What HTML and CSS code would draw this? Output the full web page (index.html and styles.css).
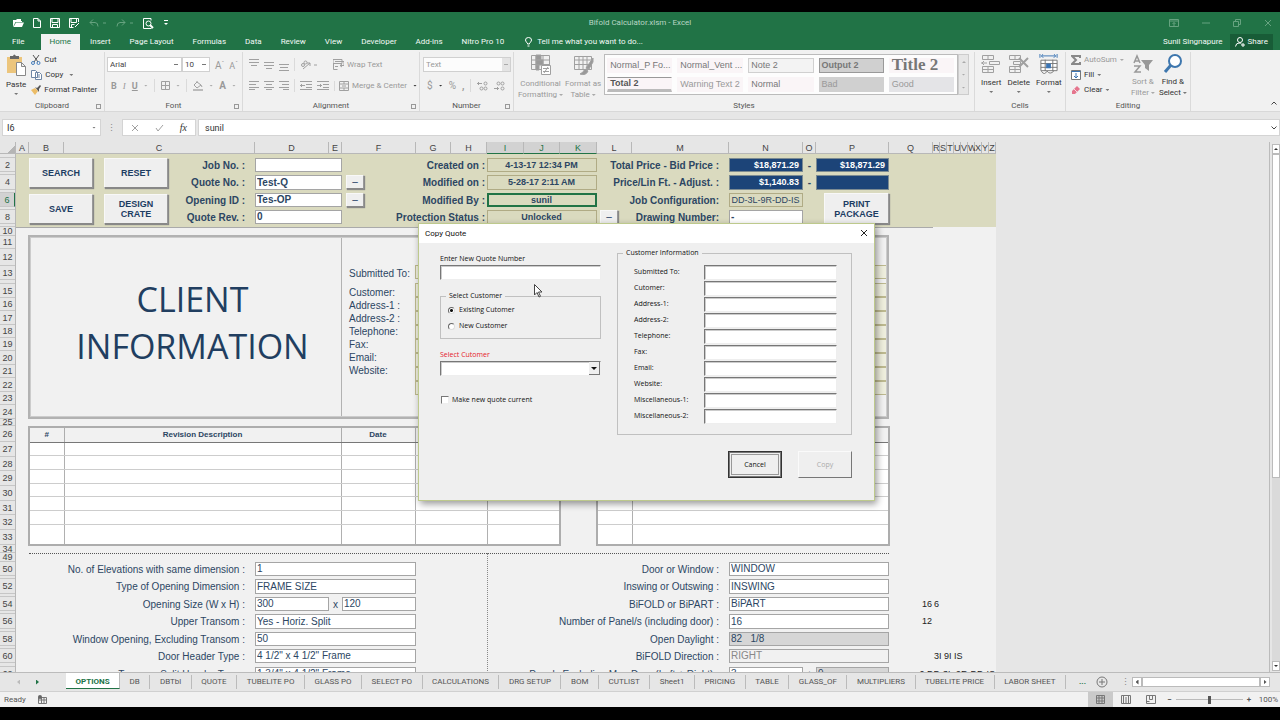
FILE: index.html
```html
<!DOCTYPE html>
<html lang="en">
<head>
<meta charset="utf-8">
<title>Bifold Calculator.xlsm - Excel</title>
<link rel="stylesheet" href="styles.css">
</head>
<body>
<div class="app">
<header class="titlebar">
  <div class="quick">
    <svg width="12" height="10" viewBox="0 0 12 10"><path fill="#fff" d="M1 9V2h3l1-1h4v2h1v1H3.500zM4 4.500h8L10 9H1.500z"/></svg>
    <svg width="8" height="10" viewBox="0 0 8 10" class="line-w"><path d="M.5.5h4.500l2.500 2.500v6.500h-7zM5 .5V3h2.500"/></svg>
    <svg width="10" height="10" viewBox="0 0 10 10" class="line-w"><path d="M.5.5h9v9h-9zM2 1v3.500h6V1M2.500 9.500v-3h5v3"/></svg>
    <svg width="11" height="10" viewBox="0 0 11 10" class="line-w"><path d="M9.500 4V.5h-9v9h4M2 1v3.500h5.500V1M2.500 9.500v-3h3M6 9l4-4"/></svg>
    <svg width="18" height="9" viewBox="0 0 18 9" class="line-d"><path d="M4 .5L1 3.500l3 3M1 3.500h5q3 0 3 4M14 4h3"/></svg>
    <svg width="18" height="9" viewBox="0 0 18 9" class="line-d"><path d="M6 .5l3 3-3 3M9 3.500H4q-3 0-3 4M14 4h3"/></svg>
    <svg width="11" height="11" viewBox="0 0 11 11" class="line-w"><path d="M8 .5H.5v10h8M8 .5v2"/><circle cx="5.500" cy="5.500" r="2.500"/><path stroke-width="2" d="M7 7l3 3"/></svg>
    <svg width="6" height="6" viewBox="0 0 6 6"><path fill="#fff" d="M1 0h4v1H1zM1 3h4L3 5z"/></svg>
  </div>
  <div class="doc-title">Bifold Calculator.xlsm - Excel</div>
  <div class="window-tools">
    <svg width="10" height="8" viewBox="0 0 10 8" class="line-d"><path d="M.5.500h9v7h-9zM.5 2h9M5 7V3.500M3.500 5L5 3.500 6.500 5"/></svg>
    <svg width="8" height="8" viewBox="0 0 8 8" class="line-d"><path d="M0 4h8"/></svg>
    <svg width="8" height="8" viewBox="0 0 8 8" class="line-d"><path d="M.5 2.500h5v5h-5zM2.500 2.500v-2h5v5h-2"/></svg>
    <svg width="8" height="8" viewBox="0 0 8 8" class="line-d"><path d="M1 1l6 6M7 1L1 7"/></svg>
  </div>
</header>
<nav class="menu">
  <button class="file">File</button><button class="active">Home</button><button>Insert</button><button>Page Layout</button><button>Formulas</button><button>Data</button><button>Review</button><button>View</button><button>Developer</button><button>Add-ins</button><button>Nitro Pro 10</button>
  <button class="tell"><svg width="7" height="10" viewBox="0 0 7 10" class="line-w"><path d="M2.500 7V6Q.5 5 .5 3a3 2.500 0 0 1 6 0q0 2-2 3v1zM2.500 9h2"/></svg>Tell me what you want to do...</button>
  <span class="user">Sunil Singnapure</span>
  <button class="share"><svg width="10" height="10" viewBox="0 0 10 10" class="line-w"><circle cx="5" cy="3" r="2.500"/><path d="M.5 9.500Q1 6 4 6q2 0 2.500 1M8 6v4M6 8h4"/></svg>Share</button>
</nav>
<section class="ribbon">
  <div class="group g-clip">
    <div class="tools">
      <button class="big"><svg width="20" height="22" viewBox="0 0 20 22"><path fill="#ecc57c" d="M1 3h15v16H1z"/><path fill="#666" d="M4 2h3q1-3 3 0h3v3H4z"/><path fill="#fff" stroke="#888" d="M10.500 8.500h5l4 4v9h-9zM15.500 8.500v4h4"/></svg><span>Paste</span><i class="caret"></i></button>
      <div class="stack">
        <button><svg width="10" height="10" viewBox="0 0 10 10" fill="none" stroke="#555"><path d="M2 0l5 7M8 0L3 7"/><g stroke="#447dbb"><circle cx="2" cy="8" r="1.500"/><circle cx="7.500" cy="8" r="1.500"/></g></svg>Cut</button>
        <button><svg width="11" height="10" viewBox="0 0 11 10" fill="#fff" stroke="#6e86a5"><path d="M.5.500h4l2 2v5h-6zM4.500 2.500h4l2 2v5h-6zM6 5h3M6 7h3"/></svg>Copy <i class="caret"></i></button>
        <button><svg width="10" height="10" viewBox="0 0 10 10"><path fill="#ecbd68" d="M0 5l4-2 3 3-3 4z"/><path fill="#555" d="M4 2l2 1 3-3 1 1-2 3v3z"/></svg>Format Painter</button>
      </div>
    </div>
    <div class="group-name">Clipboard<i class="launcher"></i></div>
  </div>
  <div class="group g-font dim">
    <div class="tools rows">
      <div class="row tight"><select class="font-name" aria-label="Font"><option>Arial</option></select><select class="font-size" aria-label="Font size"><option>10</option></select><button class="glyph">A<sup>ˆ</sup></button><button class="glyph small-a">A<sup>ˇ</sup></button></div>
      <div class="row spaced"><button><b>B</b></button><button class="ital"><em>I</em></button><button><b><u>U</u></b></button><i class="caret"></i><i class="sep"></i><svg width="9" height="9" viewBox="0 0 9 9" class="line-g"><path d="M.5.5h8v8h-8zM4.500 0v9M0 4.500h9"/></svg><i class="caret"></i><i class="sep"></i><svg width="10" height="10" viewBox="0 0 10 10" class="line-g"><path d="M1 4l3-3 4 3-4 3zM4 1V0M8 4l1 2"/><path fill="#bbb" stroke="none" d="M0 8h10v2H0z"/></svg><i class="caret"></i><button class="glyph"><b>A</b></button><i class="caret"></i></div>
    </div>
    <div class="group-name">Font<i class="launcher"></i></div>
  </div>
  <div class="group g-align dim">
    <div class="tools rows">
      <div class="row spaced">
        <svg width="10" height="12" viewBox="0 0 10 12" class="line-g"><path d="M0 .5h10M0 3.500h10M2 6.500h6"/></svg>
        <svg width="10" height="10" viewBox="0 0 10 10" class="line-g"><path d="M0 2.500h10M0 5.500h10M2 8.500h6"/></svg>
        <svg width="10" height="12" viewBox="0 0 10 12" class="line-g"><path d="M0 5.500h10M1 8.500h8M0 11.500h10"/></svg>
        <i class="sep"></i>
        <svg width="17" height="10" viewBox="0 0 17 10" class="line-g"><circle cx="3" cy="5" r="1.500"/><circle cx="5.500" cy="2.500" r="1.500"/><path d="M3 9l7-6M10 6V3H7M14 5h3"/></svg>
        <button class="wrap"><svg width="11" height="11" viewBox="0 0 11 11" class="line-g"><path d="M0 .5h9v4H0zM.5 4.500v6h4M2 2.500h9v4H7M9 5L7 6.500 9 8M2 7.500h3"/></svg>Wrap Text</button>
      </div>
      <div class="row spaced">
        <svg width="10" height="9" viewBox="0 0 10 9" class="line-g"><path d="M0 .5h10M0 3.500h7M0 6.500h10M0 8.500h6"/></svg>
        <svg width="10" height="9" viewBox="0 0 10 9" class="line-g"><path d="M0 .5h10M2 3.500h6M0 6.500h10M2 8.500h6"/></svg>
        <svg width="10" height="9" viewBox="0 0 10 9" class="line-g"><path d="M0 .5h10M3 3.500h7M0 6.500h10M4 8.500h6"/></svg>
        <i class="sep"></i>
        <svg width="12" height="9" viewBox="0 0 12 9" class="line-g"><path d="M0 .5h12M6 3.500h6M6 6.500h6M0 8.500h12M0 4.500h5M2 3L.500 4.500 2 6"/></svg>
        <svg width="12" height="9" viewBox="0 0 12 9" class="line-g"><path d="M0 .5h12M6 3.500h6M6 6.500h6M0 8.500h12M0 4.500h5M3 3l1.500 1.500L3 6"/></svg>
        <button class="merge"><svg width="10" height="10" viewBox="0 0 10 10" class="line-g"><path d="M.5.500h9v9h-9zM.5 3h9M.5 7h9M3 5h4M5 0v3M5 7v3"/></svg>Merge &amp; Center <i class="caret dark"></i></button>
      </div>
    </div>
    <div class="group-name">Alignment<i class="launcher"></i></div>
  </div>
  <div class="group g-number dim">
    <div class="tools rows">
      <div class="row"><select class="format" aria-label="Number format"><option>Text</option></select></div>
      <div class="row spaced num"><button class="glyph">$</button><i class="caret dark"></i><button class="glyph">%</button><button class="glyph"><b>,</b></button><i class="sep"></i>
        <svg width="11" height="10" viewBox="0 0 11 10" class="line-g"><path d="M0 2.500h5M2 1L.5 2.500 2 4"/><circle cx="8.500" cy="2.500" r="1.500"/><circle cx="4.500" cy="7.500" r="1.500"/><circle cx="8.500" cy="7.500" r="1.500"/></svg>
        <svg width="11" height="10" viewBox="0 0 11 10" class="line-g"><path d="M0 7.500h5M3 6l1.500 1.500L3 9"/><circle cx="8.500" cy="2.500" r="1.500"/><circle cx="4.500" cy="2.500" r="1.500"/><circle cx="8.500" cy="7.500" r="1.500"/></svg></div>
    </div>
    <div class="group-name">Number<i class="launcher"></i></div>
  </div>
  <div class="group g-styles dim">
    <div class="tools">
      <button class="big"><svg width="21" height="22" viewBox="0 0 21 22" class="line-g"><path d="M1.500 1.500h18v14h-18zM1.500 6h18M1.500 10.500h18M6 1v15M13 1v15"/><path fill="#999" d="M6 1h5v5H6zM6 6h7v5H6zM6 11h3v5H6z"/><path fill="#fff" d="M11.500 11.500h9v9h-9z"/><path d="M13 14.500h6M13 17.500h6M18 13l-4 6"/></svg><span>Conditional<br>Formatting <i class="caret"></i></span></button>
      <button class="big"><svg width="21" height="22" viewBox="0 0 21 22" class="line-g"><path d="M1.500 2.500h17v13h-17zM1.500 6h17M1.500 10.500h17M6 2v14M10 2v14M14 2v14"/><path fill="#999" d="M20 4l-7 10 3 1 4-7zM12 15l3 2q-2 5-8 3 3-1 5-5z"/></svg><span>Format as<br>Table <i class="caret"></i></span></button>
      <div class="gallery">
        <button>Normal_P Fo...</button><button>Normal_Vent ...</button><button class="note">Note 2</button><button class="output">Output 2</button><button class="title2">Title 2</button>
        <button class="total">Total 2</button><button class="warn">Warning Text 2</button><button>Normal</button><button class="bad">Bad</button><button class="good">Good</button>
      </div>
      <div class="gallery-scroll"><i class="caret up"></i><i class="caret"></i><i class="caret more"></i></div>
    </div>
    <div class="group-name">Styles</div>
  </div>
  <div class="group g-cells">
    <div class="tools">
      <button class="big"><svg width="20" height="20" viewBox="0 0 20 20" class="line-g"><path d="M1.500 1.500h11v4h-11zM7 1v4M8.500 7.500h10v3h-10zM1.500 12.500h11v6h-11zM7 12v7M1.500 15.500h11M0 9h6M3 7L1 9l2 2"/></svg><span>Insert</span><i class="caret"></i></button>
      <button class="big"><svg width="20" height="20" viewBox="0 0 20 20" class="line-g"><path d="M.5 1.500h11v4H.5zM6 1v4M4.500 7.500h7v3h-7zM.5 12.500h11v6H.5zM6 12v7M.5 15.500h11"/><path stroke-width="2" d="M10 4l9 9M19 4l-9 9"/></svg><span>Delete</span><i class="caret"></i></button>
      <button class="big"><svg width="20" height="20" viewBox="0 0 20 21" fill="none" stroke="#777"><path fill="#fff" d="M1.500 6.500h17v11h-17zM1.500 10h17M1.500 14h17M6 6v12M14 6v12M2 18q3 5 6 0 3 4 7 0"/><path fill="#3b75b5" stroke="none" d="M7 10h5v5H7z"/><path stroke="#3b75b5" d="M2 2h15M4 0L2 2l2 2M15 0l2 2-2 2M.5 0v4M18.500 0v4"/></svg><span>Format</span><i class="caret"></i></button>
    </div>
    <div class="group-name">Cells</div>
  </div>
  <div class="group g-edit">
    <div class="tools">
      <div class="stack edit">
        <button class="dim"><svg width="10" height="10" viewBox="0 0 10 10" fill="none" stroke="#888" stroke-width="2"><path d="M9 3V1H1l4 4-4 4h8V7"/></svg>AutoSum <i class="caret auto"></i></button>
        <button><svg width="10" height="10" viewBox="0 0 10 10" fill="#fff" stroke="#777"><path d="M.5.500h9v9h-9z"/><path stroke="#3b75b5" d="M.5 1.500h9M5 3v5M3 6l2 2 2-2"/></svg>Fill<i class="caret"></i></button>
        <button><svg width="10" height="10" viewBox="0 0 10 10"><path fill="#e5758d" d="M1 6l5-5 3 3-5 5H1z"/><path stroke="#f5dce2" d="M3 4l3 3"/></svg>Clear<i class="caret"></i></button>
      </div>
      <button class="big dim"><svg width="20" height="20" viewBox="0 0 20 20" fill="none" stroke="#999" stroke-width="1.500"><path d="M1 9l3-7 3 7M2 7h4M1 12h6l-5 6h6"/><path fill="#999" stroke="none" d="M8 6h12l-4 5v6l-4-3v-3z"/></svg><span>Sort &amp;<br>Filter <i class="caret"></i></span></button>
      <button class="big"><svg width="20" height="20" viewBox="0 0 20 20" fill="#fff" stroke="#3e77ae" stroke-width="2"><circle cx="12" cy="7" r="6"/><path stroke-width="3" d="M8 11l-6 7"/></svg><span>Find &amp;<br>Select <i class="caret"></i></span></button>
    </div>
    <div class="group-name">Editing</div>
  </div>
  <button class="collapse" aria-label="Collapse ribbon"><svg width="6" height="4" viewBox="0 0 6 4" fill="none" stroke="#444"><path d="M.5 3.500L3 1l2.500 2.500"/></svg></button>
</section>
<section class="formula">
  <div class="name-box"><span>I6</span><i class="caret"></i></div>
  <span class="grip">⋮</span>
  <div class="fx"><svg width="8" height="8" viewBox="0 0 8 8" class="line-g"><path d="M1 1l6 6M7 1L1 7"/></svg><svg width="9" height="8" viewBox="0 0 9 8" class="line-g"><path d="M1 4l2 3 5-6"/></svg><span class="fx-mark">fx</span></div>
  <input class="formula-text" aria-label="Formula" value="sunil">
  <svg class="expand" width="6" height="4" viewBox="0 0 6 4" fill="none" stroke="#444"><path d="M.5.500L3 3 5.500.5"/></svg>
</section>
<main class="viewport">
<div class="sheet">
  <div class="col-head corner"></div><div class="col-head">A</div><div class="col-head">B</div><div class="col-head">C</div><div class="col-head">D</div><div class="col-head">E</div><div class="col-head">F</div><div class="col-head">G</div><div class="col-head">H</div><div class="col-head on">I</div><div class="col-head on">J</div><div class="col-head on">K</div><div class="col-head">L</div><div class="col-head">M</div><div class="col-head">N</div><div class="col-head">O</div><div class="col-head">P</div><div class="col-head">Q</div><div class="col-head">R</div><div class="col-head">S</div><div class="col-head">T</div><div class="col-head">U</div><div class="col-head">V</div><div class="col-head">W</div><div class="col-head">X</div><div class="col-head">Y</div><div class="col-head">Z</div>

  <div class="row-heads">
    <div></div><div>2</div><div></div><div>4</div><div></div><div class="on">6</div><div></div><div>8</div><div></div><div>10</div><div>11</div><div>12</div><div>13</div><div></div><div>15</div><div>16</div><div>17</div><div>18</div><div>19</div><div>20</div><div>21</div><div>22</div><div>23</div><div>24</div><div>25</div><div>26</div><div>27</div><div>28</div><div>29</div><div>30</div><div>31</div><div>32</div><div>33</div><div>34</div><div>49</div><div>50</div><div></div><div>52</div><div></div><div>54</div><div></div><div>56</div><div></div><div>58</div><div></div><div>60</div><div></div><div>62</div>
  </div>

  <div class="freeze"></div><div class="freeze-line"></div>
  <div class="actions"><button>SEARCH</button><button>RESET</button><button>SAVE</button><button>DESIGN<br>CRATE</button></div>

  <label class="lab c r2 strong" for="job">Job No. :</label><input class="box d r2 strong" id="job">
  <label class="lab c r4 strong" for="quote">Quote No. :</label><input class="box d r4 strong" id="quote" value="Test-Q"><button class="pick f r4">–</button>
  <label class="lab c r6 strong" for="opening">Opening ID :</label><input class="box d r6 strong" id="opening" value="Tes-OP"><button class="pick f r6">–</button>
  <label class="lab c r8 strong" for="rev">Quote Rev. :</label><input class="box d r8 strong" id="rev" value="0">

  <div class="lab h r2 strong">Created on :</div><div class="box beige i r2">4-13-17 12:34 PM</div>
  <div class="lab h r4 strong">Modified on :</div><div class="box beige i r4">5-28-17 2:11 AM</div>
  <div class="lab h r6 strong">Modified By :</div><div class="box beige picked i r6">sunil</div>
  <div class="lab h r8 strong">Protection Status :</div><div class="box beige i r8">Unlocked</div><button class="pick l r8">–</button>

  <div class="lab m r2 strong">Total Price - Bid Price :</div><div class="box navy n r2">$18,871.29</div><div class="dash r2">-</div><div class="box navy p r2">$18,871.29</div>
  <div class="lab m r4 strong">Price/Lin Ft. - Adjust. :</div><div class="box navy n r4">$1,140.83</div><div class="dash r4">-</div><div class="box navy p r4"></div>
  <div class="lab m r6 strong">Job Configuration:</div><div class="box beige plain n r6">DD-3L-9R-DD-IS</div>
  <label class="lab m r8 strong" for="drawing">Drawing Number:</label><input class="box n r8 strong" id="drawing" value="-">
  <button class="print">PRINT<br>PACKAGE</button>

  <section class="client">
    <h1>CLIENT<br>INFORMATION</h1>
    <div class="contact">
      <div class="first">Submitted To:</div><div>Customer:</div><div>Address-1 :</div><div>Address-2 :</div><div>Telephone:</div><div>Fax:</div><div>Email:</div><div>Website:</div>
    </div>
    <div class="contact-values"><div class="first"></div><div></div><div></div><div></div><div></div><div></div><div></div><div></div><div></div></div>
  </section>

  <table class="revisions left">
    <colgroup><col class="w-no"><col><col class="w-date"><col class="w-x"><col class="w-y"></colgroup>
    <thead><tr><th>#</th><th>Revision Description</th><th>Date</th><th></th><th></th></tr></thead>
    <tbody><tr><td></td><td></td><td></td><td></td><td></td></tr><tr><td></td><td></td><td></td><td></td><td></td></tr><tr><td></td><td></td><td></td><td></td><td></td></tr><tr><td></td><td></td><td></td><td></td><td></td></tr><tr><td></td><td></td><td></td><td></td><td></td></tr><tr><td></td><td></td><td></td><td></td><td></td></tr><tr><td></td><td></td><td></td><td></td><td></td></tr></tbody>
  </table>
  <table class="revisions right">
    <colgroup><col class="w-no"><col></colgroup>
    <thead><tr><th></th><th></th></tr></thead>
    <tbody><tr><td></td><td></td></tr><tr><td></td><td></td></tr><tr><td></td><td></td></tr><tr><td></td><td></td></tr><tr><td></td><td></td></tr><tr><td></td><td></td></tr><tr><td></td><td></td></tr></tbody>
  </table>
  <div class="dots-h"></div><div class="dots-v"></div>

  <label class="lab c r50" for="f50">No. of Elevations with same dimension :</label><input class="box df r50" id="f50" value="1">
  <label class="lab c r52" for="f52">Type of Opening Dimension :</label><input class="box df r52" id="f52" value="FRAME SIZE">
  <label class="lab c r54" for="f54">Opening Size (W x H) :</label><input class="box d1 r54" id="f54" value="300"><div class="by r54">x</div><input class="box f1 r54" aria-label="Height" value="120">
  <label class="lab c r56" for="f56">Upper Transom :</label><input class="box df r56" id="f56" value="Yes - Horiz. Split">
  <label class="lab c r58" for="f58">Window Opening, Excluding Transom :</label><input class="box df r58" id="f58" value="50">
  <label class="lab c r60" for="f60">Door Header Type :</label><input class="box df r60" id="f60" value="4 1/2&quot; x 4 1/2&quot; Frame">
  <label class="lab c r62" for="f62">Transom Split Header Type :</label><input class="box df r62" id="f62" value="1 3/4&quot; x 4 1/2&quot; Frame">

  <label class="lab m r50" for="g50">Door or Window :</label><input class="box np r50" id="g50" value="WINDOW">
  <label class="lab m r52" for="g52">Inswing or Outswing :</label><input class="box np r52" id="g52" value="INSWING">
  <label class="lab m r54" for="g54">BiFOLD or BiPART :</label><input class="box np r54" id="g54" value="BiPART">
  <label class="lab m r56" for="g56">Number of Panel/s (including door) :</label><input class="box np r56" id="g56" value="16">
  <div class="lab m r58">Open Daylight :</div><div class="box np r58 grey">82 &nbsp; 1/8</div>
  <div class="lab m r60">BiFOLD Direction :</div><div class="box np r60 faint">RIGHT</div>
  <label class="lab m r62" for="g62">Panels Excluding Man Door (Left + Right) :</label><input class="box n r62" id="g62" value="3"><div class="dash light r62">+</div><div class="box p r62 grey">9</div>

  <div class="calc q r54">16</div><div class="calc rr r54">6</div><div class="calc q r56">12</div><div class="calc rr r60">3I 9I IS</div><div class="calc q r62">0 DD-3L-9R-DD-IS</div>
</div>
<div class="vscroll"><button aria-label="Scroll up"><i class="caret up dark"></i></button><div class="vthumb"></div><div class="vtrack"></div><button aria-label="Scroll down"><i class="caret dark"></i></button></div>
</main>
<nav class="sheet-tabs">
  <div class="tab-nav"><i class="tri prev"></i><i class="tri next"></i></div>
  <div class="tabs"><button class="current">OPTIONS</button><button>DB</button><button>DBTbl</button><button>QUOTE</button><button>TUBELITE PO</button><button>GLASS PO</button><button>SELECT PO</button><button>CALCULATIONS</button><button>DRG SETUP</button><button>BOM</button><button>CUTLIST</button><button>Sheet1</button><button>PRICING</button><button>TABLE</button><button>GLASS_OF</button><button>MULTIPLIERS</button><button>TUBELITE PRICE</button><button>LABOR SHEET</button></div>
  <div class="tab-extra"><b>...</b><svg width="12" height="12" viewBox="0 0 12 12" fill="none" stroke="#777"><circle cx="6" cy="6" r="5"/><path d="M6 3v6M3 6h6"/></svg><span class="grip">⋮</span></div>
  <div class="hscroll"><button aria-label="Scroll left"><i class="tri prev dark"></i></button><div></div><button aria-label="Scroll right"><i class="tri next dark"></i></button></div>
</nav>
<footer class="status">
  <span>Ready</span>
  <svg class="macro" width="10" height="9" viewBox="0 0 10 9"><path fill="none" stroke="#777" d="M.5 2.500h8v6h-8zM0 5h9M3.500 2v7M6 2v7"/><circle cx="2" cy="2" r="2" fill="#666"/></svg>
  <div class="views">
    <button class="on" aria-label="Normal view"><svg width="10" height="9" viewBox="0 0 10 9" fill="none" stroke="#777"><path d="M.5.5h8v8h-8zM.5 3h8M.5 6h8M3 .5v8M6 .5v8"/></svg></button>
    <button aria-label="Page layout view"><svg width="10" height="9" viewBox="0 0 10 9" fill="none" stroke="#777"><path d="M.5.500h9v8h-9zM2.500 1v7M7.500 1v7M4 3h2M4 5h2M4 7h2"/></svg></button>
    <button aria-label="Page break view"><svg width="10" height="9" viewBox="0 0 10 9" fill="none" stroke="#777"><path d="M.5.500h9v8h-9zM3.500.5v4h3v-4M.5 6.500h3"/></svg></button>
  </div>
  <b>−</b><input class="zoom" type="range" min="0" max="100" value="50" aria-label="Zoom"><b>+</b><span class="pct">100%</span>
</footer>

<section class="dialog" role="dialog" aria-labelledby="dlg">
  <header><span id="dlg">Copy Quote</span><button aria-label="Close"><svg width="8" height="8" viewBox="0 0 8 8" fill="none" stroke="#222"><path d="M1 1l6 6M7 1L1 7"/></svg></button></header>
  <form class="dialog-body">
    <div class="choices">
      <label for="newq">Enter New Quote Number</label><input class="sunk" id="newq">
      <fieldset class="radios"><legend>Select Customer</legend>
        <label><input type="radio" name="cust" checked>Existing Cutomer</label>
        <label><input type="radio" name="cust">New Customer</label>
      </fieldset>
      <label class="red" for="selc">Select Cutomer</label><div class="combo"><select class="sunk" id="selc"><option></option></select><i class="combo-arrow"></i></div>
      <label class="check"><input type="checkbox">Make new quote current</label>
    </div>
    <div class="details">
      <fieldset class="info"><legend>Customer Information</legend>
        <label for="i1">Submitted To:</label><input class="sunk" id="i1">
        <label for="i2">Cutomer:</label><input class="sunk" id="i2">
        <label for="i3">Address-1:</label><input class="sunk" id="i3">
        <label for="i4">Address-2:</label><input class="sunk" id="i4">
        <label for="i5">Telephone:</label><input class="sunk" id="i5">
        <label for="i6">Fax:</label><input class="sunk" id="i6">
        <label for="i7">Email:</label><input class="sunk" id="i7">
        <label for="i8">Website:</label><input class="sunk" id="i8">
        <label for="i9">Miscellaneous-1:</label><input class="sunk" id="i9">
        <label for="i10">Miscellaneous-2:</label><input class="sunk" id="i10">
      </fieldset>
      <div class="buttons"><button type="button" class="cancel">Cancel</button><button type="button" disabled>Copy</button></div>
    </div>
  </form>
</section>
<svg class="pointer" width="9" height="14" viewBox="0 0 9 14"><path fill="#fff" stroke="#444" d="M.5.500v10.500l2.500-2.500 2 4.500 1.500-.7-2-4.300H8z"/></svg>
</div>
</body>
</html>
```
FILE: styles.css
```css
* { box-sizing: border-box; }
body { margin: 0; background: #000; font: 8px/10px Roboto, "Open Sans", sans-serif; color: #333; }
button, input, select { font: inherit; color: inherit; margin: 0; padding: 0; border: 0; background: none; border-radius: 0; }
select { appearance: none; }
i { font-style: normal; }
svg { flex: none; }
.app { position: relative; height: 100vh; padding: 12px 0 13px; display: flex; flex-direction: column; overflow: hidden; }
.line-w { fill: none; stroke: #fff; }
.line-d { fill: none; stroke: #67a380; }
.line-g { fill: none; stroke: #a0a0a0; }
.caret { display: inline-block; flex: none; width: 4px; height: 2px; background: #777; clip-path: polygon(0 0, 100% 0, 50% 100%); vertical-align: middle; }
.caret.up { transform: rotate(180deg); }
.caret.dark { background: #333; }

.titlebar { flex: 0 0 22px; background: #217346; display: grid; grid-template-columns: 1fr auto 1fr; align-items: center; }
.quick { display: flex; align-items: center; gap: 9px; padding-left: 12px; height: 18px; }
.doc-title { color: #b9d6c5; }
.window-tools { display: flex; justify-content: flex-end; gap: 23px; padding-right: 8px; }

.menu { flex: 0 0 16px; background: #217346; color: #f4faf6; display: flex; align-items: stretch; padding-right: 7px; }
.menu button { padding: 0 9px 0 10px; display: flex; align-items: center; white-space: nowrap; }
.menu .file { padding: 0 16px 0 12px; }
.menu .active { background: #f1f1f1; color: #217346; padding: 0 9px; }
.menu .tell { gap: 5px; padding-left: 12px; }
.menu .user { margin-left: auto; padding-right: 7px; line-height: 16px; }
.menu .share { background: #185c37; padding: 0 5px; gap: 3px; }

.ribbon { flex: 0 0 62px; background: #f1f1f1; display: flex; border-bottom: 1px solid #d8d8d8; }
.group { display: flex; flex-direction: column; border-right: 1px solid #dadada; margin-top: 2px; }
.tools { flex: 1; display: flex; align-items: flex-start; padding-top: 2px; }
.rows { flex-direction: column; padding-top: 5px; gap: 6px; }
.row { display: flex; align-items: center; height: 15px; width: 100%; }
.group-name { text-align: center; color: #555; position: relative; line-height: 10px; }
.launcher { position: absolute; right: 3px; top: 3px; width: 5px; height: 5px; border: solid #999; border-width: 1px 0 0 1px; }
.launcher::after { content: ""; display: block; width: 3px; height: 3px; border: solid #999; border-width: 0 1px 1px 0; }
.dim, .dim button { color: #999; }
.dim .group-name { color: #555; }
.dim .caret { background: #aaa; }
.dim .caret.dark { background: #333; }
.sep { width: 1px; height: 13px; background: #dadada; }
.big { display: flex; flex-direction: column; align-items: center; gap: 2px; line-height: 11px; white-space: nowrap; }
.stack { display: flex; flex-direction: column; gap: 5px; }
.stack button { display: flex; align-items: center; gap: 3px; height: 10px; white-space: nowrap; }
.glyph { font-size: 10px; }
.glyph sup { font-size: 6px; }
.g-clip { flex: 0 0 105px; }
.g-clip .tools { gap: 5px; padding-left: 6px; }
.g-clip .caret { margin-left: 3px; }
.g-clip .big .caret { margin-left: 0; }
.g-clip .stack { padding-top: 1px; }
.g-font { flex: 0 0 138px; }
.g-font .rows { padding-left: 2px; }
.g-font .row.spaced { padding: 0 6px 0 4px; justify-content: space-between; font-size: 9px; }
.ital { font-family: "Liberation Serif", serif; }
.ribbon select { height: 15px; border: 1px solid #d0d0d0; background: #fff; padding: 0 2px; }
.ribbon select.font-name, .ribbon select.font-size { color: #444; background: linear-gradient(#777, #777) calc(100% - 3px) 6px / 4px 1px no-repeat, #fff; }
.font-name { width: 75px; }
.font-size { width: 28px; }
.g-font .glyph { margin-left: 5px; }
.g-font .spaced .glyph { margin: 0; }
.small-a { font-size: 9px; }
.g-align { flex: 0 0 177px; }
.g-align .rows { padding-left: 6px; }
.g-align .spaced { gap: 5px; }
.g-align button { display: flex; align-items: center; gap: 3px; white-space: nowrap; }
.g-align .wrap { margin-left: 11px; }
.g-align .merge { border-left: 1px solid #dadada; padding-left: 4px; }
.g-align .merge .caret { margin-left: 3px; }
.g-number { flex: 0 0 94px; }
.g-number .rows { padding-left: 3px; }
.ribbon select.format { width: 88px; background: linear-gradient(#aaa, #aaa) calc(100% - 2px) 6px / 4px 1px no-repeat, linear-gradient(#e4e4e4, #e4e4e4) 100% 0 / 8px 100% no-repeat, #fcfcfc; }
.num { gap: 6px; padding-left: 4px; }
.g-styles { flex: 0 0 461px; }
.g-styles .tools { gap: 3px; padding-left: 4px; }
.g-styles .big + .big { margin-left: -1px; }
.gallery { flex: 1; height: 41px; border: 1px solid #bbb; background: #fdfdfd; display: grid; grid-template-columns: repeat(5, 1fr); grid-template-rows: 15px 15px; gap: 4px 5px; padding: 3px 3px 0 2px; margin-right: -3px; }
.gallery button { background: #faf5f7; color: #777; font: 9px/13px "Liberation Sans", sans-serif; text-align: left; padding-left: 2px; white-space: nowrap; border: 1px solid transparent; }
.gallery .note { background: #f3f3f3; border-color: #d0d0d0; }
.gallery .output { background: #d0d0d0; border-color: #999; font-weight: bold; }
.gallery .title2 { font: bold 17px/9px "Liberation Serif", serif; padding-bottom: 3px; }
.gallery .total { font-weight: bold; border-top-color: #999; border-bottom: 3px solid #bbb; line-height: 11px; color: #555; }
.gallery .warn { color: #999; }
.gallery .bad { background: #d0d0d0; color: #999; }
.gallery .good { background: #e4e4e7; color: #999; }
.gallery-scroll { width: 11px; height: 41px; background: #e6e6e6; border: 1px solid #ccc; display: flex; flex-direction: column; align-items: center; justify-content: space-around; margin-right: 5px; }
.g-cells { flex: 0 0 91px; }
.g-cells .tools { gap: 6px; padding-left: 6px; }
.g-cells .big, .g-clip .big { gap: 3px; }
.g-edit { flex: 0 0 125px; }
.g-edit .tools { gap: 3px; padding-left: 5px; }
.edit { width: 56px; padding-top: 1px; }
.g-edit .big { margin-left: 1px; }
.collapse { margin: auto 3px 3px auto; }

.formula { flex: 0 0 30px; background: #e6e6e6; display: flex; align-items: center; padding: 1px 0 0 2px; font-size: 9px; }
.name-box, .fx, .formula-text { height: 17px; background: #fff; border: 1px solid #d4d4d4; display: flex; align-items: center; }
.name-box { width: 99px; justify-content: space-between; padding: 0 4px; }
.grip { width: 21px; text-align: center; color: #888; font-size: 9px; }
.fx { width: 74px; justify-content: space-around; }
.fx-mark { font: italic 10px "Liberation Serif", serif; }
.formula-text { flex: 1; margin-left: 2px; padding-left: 6px; }
.expand { margin: 0 3px 0 -9px; }

.viewport { flex: 1; min-height: 0; background: #e6e6e6; display: flex; justify-content: space-between; overflow: hidden; font-family: "Liberation Sans", Arial, sans-serif; border-bottom: 1px solid #bbb; }
.sheet { display: grid; flex: none; align-self: flex-start; background: #f1f1f1; color: #2c4663; font-size: 10px; line-height: 12px;
  grid-template-columns: 16px 13px 35px 191px 74px 13px 74px 35px 36px 37px 36px 37px 35px 97px 74px 13px 73px 44px repeat(9, 7px);
  grid-template-rows: 12px 4px 14px 3px 15px 3px 14px 3px 14px 3px 9px 13px 17px 14px 4px 14px 13px 14px 13px 13px 14px 13px 14px 13px 14px 7px 16px 15px 14px 15px 15px 14px 15px 15px 8px 9px 14px 3px 15px 3px 14px 3px 15px 3px 14px 3px 14px 4px 14px; }
.col-head { grid-row: 1; background: #e6e6e6; color: #444; text-align: center; font-size: 9px; border: solid #b8b8b8; border-width: 0 1px 1px 0; }
.col-head.on { background: #d2d2d2; color: #217346; border-bottom-color: #217346; }
.corner { background: linear-gradient(135deg, #e6e6e6 70%, #b5b5b5 70%); }
.row-heads { grid-column: 1; grid-row: 2 / -1; display: grid; grid-template-rows: subgrid; background: #e6e6e6; color: #444; font-size: 9px; text-align: center; border-right: 1px solid #b8b8b8; }
.row-heads div { border-bottom: 1px solid #c6c6c6; overflow: hidden; min-height: 0; display: flex; align-items: center; justify-content: center; }
.row-heads .on { background: #d2d2d2; color: #217346; border-right: 1px solid #217346; }
.freeze { grid-column: 2 / -1; grid-row: 2 / 11; background: #dadabf; }
.freeze-line { grid-column: 2 / 19; grid-row: 11; border-top: 1px solid #aaa; }
.r2 { grid-row: 3; } .r4 { grid-row: 5; } .r6 { grid-row: 7; } .r8 { grid-row: 9; }
.r50 { grid-row: 37; } .r52 { grid-row: 39; } .r54 { grid-row: 41; } .r56 { grid-row: 43; } .r58 { grid-row: 45; } .r60 { grid-row: 47; } .r62 { grid-row: 49; }
.lab { text-align: right; line-height: 15px; white-space: nowrap; }
.strong { font-weight: bold; }
.c { grid-column: 3 / 5; padding-right: 10px; }
.h { grid-column: 7 / 10; padding-right: 2px; }
.m { grid-column: 11 / 15; padding-right: 10px; }
.box { background: #fff; border: 1px solid #a5a5a5; padding: 0 2px 0 1px; line-height: 12px; min-width: 0; width: 100%; white-space: nowrap; color: #2c4663; }
.d { grid-column: 5 / 7; } .i { grid-column: 10 / 13; } .n { grid-column: 15; } .p { grid-column: 17; }
.df { grid-column: 5 / 8; } .d1 { grid-column: 5; } .f1 { grid-column: 7; } .np { grid-column: 15 / 18; }
.beige { background: #dadabf; border-color: #b0ab85; text-align: center; font-weight: bold; font-size: 9px; }
.beige.plain { font-weight: normal; }
.picked { border: 1px solid #217346; box-shadow: 0 0 0 1px #217346 inset; }
.navy { background: #1c4478; color: #fff; border-color: #7c8b92; text-align: right; font-weight: bold; font-size: 9px; padding-right: 3px; }
.grey { background: #d6d6d6; }
.faint { background: #f1f1f1; color: #888; }
.dash { grid-column: 16; text-align: center; font-weight: bold; line-height: 15px; }
.dash.light, .by { font-weight: normal; }
.by { grid-column: 6; text-align: center; line-height: 15px; }
.calc { color: #222; font-size: 9px; line-height: 15px; white-space: nowrap; }
.q { grid-column: 18; text-align: right; padding-right: 1px; }
.rr { grid-column: 19 / 28; padding-left: 1px; }
.calc.r62 { grid-column: 18 / 28; }
.pick, .actions button, .print { background: #efefef; border: 1px solid; border-color: #f8f8f8 #999 #888 #f8f8f8; box-shadow: 1px 1px 1px #888; color: #1d3d63; }
.pick { width: 18px; height: 14px; line-height: 10px; }
.f { grid-column: 7; margin-left: 4px; }
.l { grid-column: 13; margin-left: 3px; }
.actions { grid-column: 3 / 5; grid-row: 3 / 10; display: grid; grid-template-columns: 64px 64px; grid-template-rows: 30px 30px; gap: 6px 11px; }
.actions button, .print { font-weight: bold; font-size: 9px; line-height: 10px; }
.print { grid-column: 16 / 18; grid-row: 7 / 10; width: 65px; justify-self: end; }

.client { grid-column: 3 / 18; grid-row: 12 / 26; margin: -1px 0 0 -1px; border: 2px solid #b2b2b2; outline: 1px solid #ccc; outline-offset: -3px; display: grid; grid-template-columns: 312px 73px 1fr; z-index: 1; }
.client h1 { margin: 0; border-right: 1px solid #b2b2b2; font: 34px/47px "Open Sans", sans-serif; color: #213e60; text-align: center; padding-top: 39px; padding-left: 14px; }
.contact { padding: 30px 0 0 7px; display: flex; flex-direction: column; line-height: 13px; white-space: nowrap; }
.contact .first { margin-bottom: 6px; }
.contact-values { padding-top: 28px; }
.contact-values div { height: 14px; border: 1px solid #bdb98f; background: #eeeedd; }
.contact-values .first { margin-bottom: 4px; }

.revisions { border-collapse: collapse; table-layout: fixed; height: 120px; background: #fff; border: 2px solid #adadad; z-index: 1; margin: 0 0 0 -1px; }
.left { grid-column: 3 / 12; grid-row: 27 / 35; width: 533px; }
.right { grid-column: 13 / 18; grid-row: 27 / 35; width: 294px; }
.revisions th { background: #f1f1f1; font-size: 8px; line-height: 10px; height: 15px; padding: 0; border: 1px solid #adadad; border-bottom-color: #777; }
.revisions td { padding: 0; border: 1px solid #cdcdcd; border-left-color: #b0b0b0; border-right-color: #b0b0b0; }
.w-no { width: 35px; } .w-date { width: 74px; } .w-x { width: 72px; } .w-y { width: 73px; }
.dots-h { grid-column: 3 / 18; grid-row: 36; border-top: 1px dotted #555; }
.dots-v { grid-column: 10; grid-row: 36 / -1; border-left: 1px dotted #888; }

.vscroll { width: 11px; flex: none; display: flex; flex-direction: column; border-left: 1px solid #bbb; padding: 2px 0 1px 2px; }
.vscroll button { height: 10px; background: #fff; border: 1px solid #bbb; display: flex; align-items: center; justify-content: center; }
.vthumb { flex: 325; background: #fff; border: 1px solid #bbb; }
.vtrack { flex: 185; background: #dadada; }

.sheet-tabs { flex: 0 0 19px; background: #e6e6e6; display: flex; align-items: center; color: #555; border-bottom: 1px solid #d0d0d0; }
.tab-nav { width: 66px; display: flex; justify-content: space-between; padding: 0 27px 0 17px; }
.tri { width: 3px; height: 5px; background: #bbb; }
.tri.prev { clip-path: polygon(100% 0, 100% 100%, 0 50%); }
.tri.next { clip-path: polygon(0 0, 100% 50%, 0 100%); background: #217346; }
.tri.dark { background: #555; }
.tabs { flex: 1; display: flex; align-self: stretch; padding-bottom: 2px; }
.tabs button { flex: 1 0 auto; border-right: 1px solid #bbb; white-space: nowrap; padding: 0 7px; margin: 2px 0 0; }
.tabs .current { background: #fff; color: #217346; font-weight: bold; border-bottom: 1px solid #217346; margin: 0; padding-top: 2px; }
.tab-extra { display: flex; align-items: center; gap: 10px; padding-left: 13px; color: #217346; }
.tab-extra .grip { width: 14px; }
.hscroll { width: 138px; height: 10px; display: flex; margin-right: 10px; }
.hscroll > * { background: #fff; border: 1px solid #bbb; }
.hscroll div { flex: 1; }
.hscroll button { width: 10px; display: flex; align-items: center; justify-content: center; }

.status { flex: 0 0 15px; background: #f1f1f1; display: flex; align-items: center; padding-left: 4px; color: #555; }
.macro { margin-left: 12px; }
.views { margin-left: auto; display: flex; align-self: stretch; margin-right: 4px; }
.views button { width: 25px; display: flex; align-items: center; justify-content: center; }
.views .on { background: #cacaca; }
.zoom { appearance: none; width: 67px; height: 9px; margin: 0 4px; background: linear-gradient(#bbb, #bbb) 0 4px / 100% 1px no-repeat; }
.zoom::-webkit-slider-thumb { appearance: none; width: 3px; height: 8px; background: #555; }
.pct { width: 29px; text-align: right; padding-right: 2px; }

.dialog { position: absolute; z-index: 5; left: 418px; top: 223px; width: 457px; height: 278px; border: 1px solid #bdc98c; background: #efefef; box-shadow: 2px 3px 7px rgba(0, 0, 0, .4); font: 7px/10px "Open Sans", sans-serif; color: #111; }
.dialog header { height: 19px; background: #fff; display: flex; justify-content: space-between; align-items: center; padding: 0 6px; font: 8px Roboto, sans-serif; }
.dialog-body { display: grid; grid-template-columns: 161px 235px; gap: 16px; padding: 5px 21px; }
.choices { display: flex; flex-direction: column; padding-top: 6px; }
.sunk { background: #fff; border: 1px solid; border-color: #777 #eee #eee #777; height: 15px; width: 100%; box-shadow: 1px 1px 0 #ccc inset; }
.choices > .sunk { margin-top: 1px; }
fieldset { margin: 0; padding: 0; border: 1px solid #c0c0c0; min-width: 0; }
legend { padding: 0 3px; }
.radios { margin-top: 11px; height: 48px; padding: 1px 0 0 7px; }
.radios legend { margin-left: -2px; }
.radios label { display: flex; align-items: center; gap: 4px; height: 16px; }
input[type="radio"] { appearance: none; width: 7px; height: 7px; border-radius: 50%; border: 1px solid; border-color: #666 #ddd #ddd #666; background: #fff; }
input[type="radio"]:checked { background: radial-gradient(#111 0 1px, #fff 2px); }
.red { color: #e5202b; margin-top: 11px; }
.combo { position: relative; margin-top: 1px; height: 15px; }
.combo-arrow { position: absolute; right: 1px; top: 1px; width: 11px; height: 13px; background: #efefef; border: solid #777; border-width: 0 1px 1px 0; }
.combo-arrow::after { content: ""; display: block; width: 6px; height: 3px; margin: 5px 0 0 2px; background: #111; clip-path: polygon(0 0, 100% 0, 50% 100%); }
.check { display: flex; align-items: center; gap: 3px; margin-top: 19px; padding-left: 1px; }
input[type="checkbox"] { appearance: none; width: 8px; height: 8px; border: 1px solid; border-color: #777 #eee #eee #777; background: #fff; }
.info { display: grid; grid-template-columns: 70px 133px; grid-auto-rows: 16px; align-items: center; height: 187px; padding: 6px 0 0 16px; }
.info legend { margin-left: -11px; }
.buttons { display: flex; justify-content: flex-end; gap: 16px; margin-top: 16px; }
.buttons button { width: 54px; height: 27px; border: 1px solid; border-color: #fafafa #777 #777 #fafafa; }
.buttons .cancel { border: 1px solid #333; box-shadow: 0 0 0 1px #777 inset; outline: 1px solid #999; outline-offset: -4px; }
.buttons button:disabled { color: #aaa; }
.pointer { position: absolute; z-index: 6; left: 534px; top: 284px; }
```
